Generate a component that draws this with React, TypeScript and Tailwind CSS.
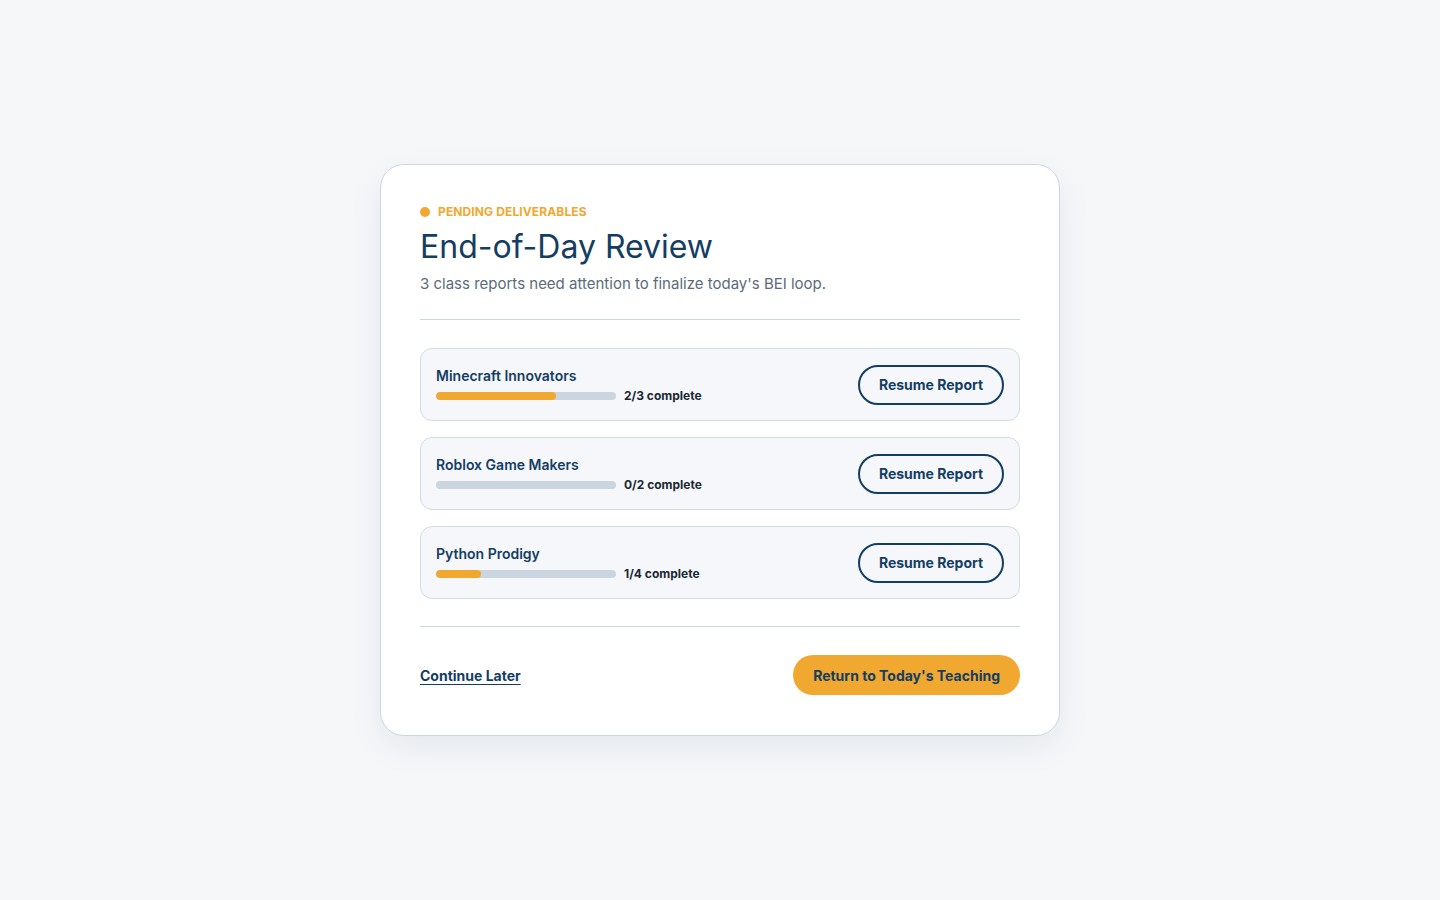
import React from 'react';

interface ReportItem {
  name: string;
  done: number;
  total: number;
}

const reports: ReportItem[] = [
  { name: 'Minecraft Innovators', done: 2, total: 3 },
  { name: 'Roblox Game Makers', done: 0, total: 2 },
  { name: 'Python Prodigy', done: 1, total: 4 },
];

// Single class report row with progress bar
const ReportRow: React.FC<{ item: ReportItem }> = ({ item }) => {
  const pct = item.total ? (item.done / item.total) * 100 : 0;

  return (
    <div className="flex h-[73px] items-center justify-between rounded-xl border border-[#d3dbe4] bg-[#f5f7fa] px-[15px]">
      <div className="flex flex-col pt-[3px]">
        <p className="text-[14px] leading-[18px] font-semibold text-[#143d63]">{item.name}</p>
        <div className="mt-[2px] flex h-[18px] items-center gap-2">
          <div className="h-[8px] w-[180px] overflow-hidden rounded-full bg-[#cbd5df]">
            <div className="h-full rounded-full bg-[#f0a830]" style={{ width: `${pct}%` }} />
          </div>
          <span className="text-[12px] leading-[18px] font-bold text-[#1b2733]">
            {item.done}/{item.total} complete
          </span>
        </div>
      </div>
      <button className="h-[40px] w-[146px] rounded-full border-2 border-[#143d63] text-[14px] font-bold text-[#143d63]">
        Resume Report
      </button>
    </div>
  );
};

export default function App() {
  return (
    <div
      className="flex min-h-screen items-center justify-center bg-[#f6f7f9]"
      style={{ fontFamily: 'Inter, "Noto Sans", sans-serif' }}
    >
      <div className="w-[680px] rounded-[24px] border border-[#ccd6e0] bg-white px-[39px] pt-[40px] pb-[40px] shadow-[0_12px_32px_rgba(20,61,99,0.08)]">
        <div className="border-b border-[#ccd6e0] pb-[24px]">
          <div className="flex h-[14px] items-center gap-2">
            <span className="h-[10px] w-[10px] rounded-full bg-[#f0a830]" />
            <span className="text-[12px] font-bold tracking-[0.01em] text-[#f0a830] uppercase">
              Pending Deliverables
            </span>
          </div>
          <h1 className="mt-[8px] text-[32px] leading-[40px] font-normal text-[#143d63]">End-of-Day Review</h1>
          <p className="mt-[6px] text-[15px] leading-[22px] text-[#5c6b7a]">
            3 class reports need attention to finalize today's BEI loop.
          </p>
        </div>

        <div className="mt-7 flex flex-col gap-4">
          {reports.map((r) => (
            <ReportRow key={r.name} item={r} />
          ))}
        </div>

        <div className="mt-[27px] flex items-center justify-between border-t border-[#ccd6e0] pt-7">
          <a href="#" className="text-[14px] font-bold text-[#143d63] underline underline-offset-[3px]">
            Continue Later
          </a>
          <button className="h-[40px] rounded-full bg-[#f0a830] px-5 text-[14px] font-bold text-[#143d63]">
            Return to Today's Teaching
          </button>
        </div>
      </div>
    </div>
  );
}
